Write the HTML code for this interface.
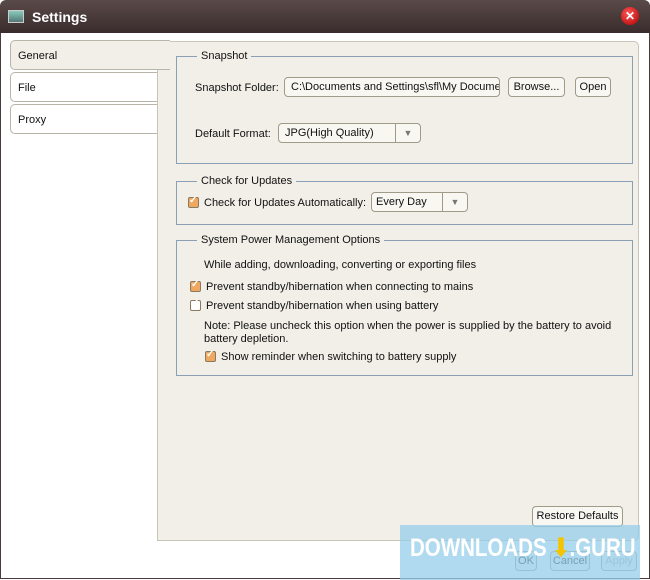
<html><head><style>
body{margin:0;width:650px;height:580px;overflow:hidden;background:#fff;font-family:"Liberation Sans",sans-serif;font-size:11px;color:#111;position:relative}
.a{position:absolute;white-space:nowrap}
.tb{left:0;top:0;width:650px;height:33px;background:linear-gradient(#5a4a4a,#3a2c2c);border-radius:6px 6px 0 0}
.btn{position:absolute;border:1px solid #a09a88;border-radius:4px;background:#f8f7f2;height:20px;line-height:19px;text-align:center;box-sizing:border-box;white-space:nowrap;overflow:hidden}
.fs{position:absolute;border:1px solid #8aa0b4;box-sizing:border-box}
.lg{position:absolute;background:#f1efe8;padding:0 4px;top:-7px;left:20px;white-space:nowrap}
.cb{position:absolute;width:11px;height:11px;border:1px solid #8a7a60;border-radius:2px;background:#f0a860;box-sizing:border-box}
.cb::after{content:"✓";position:absolute;left:0;top:-3px;font-size:10px;color:#fff;font-weight:bold}
.tab{position:absolute;left:10px;width:147px;height:30px;border:1px solid #b8b4a8;border-right:none;border-radius:5px 0 0 5px;box-sizing:border-box;padding-left:7px;line-height:30px;background:#fff}
.t{margin-top:2px}
</style></head><body>
<div class="a tb"></div>
<div class="a" style="left:8px;top:10px;width:14px;height:11px;background:linear-gradient(#8cb,#577);border:1px solid #ccc"></div>
<div class="a" style="left:32px;top:9px;color:#fff;font-size:14px;font-weight:bold">Settings</div>
<div class="a" style="left:621px;top:7px;width:18px;height:18px;border-radius:50%;background:radial-gradient(circle at 40% 35%,#f55,#a00);color:#fff;text-align:center;line-height:18px;font-size:12px;font-weight:bold">✕</div>
<div class="a" style="left:0;top:33px;width:648px;height:545px;border:1px solid #4a3c3c;border-top:none"></div>
<div class="a" style="left:157px;top:41px;width:482px;height:500px;background:#f1efe8;border:1px solid #c8c4b8;border-radius:0 5px 5px 0;box-sizing:border-box"></div>
<div class="tab" style="top:40px;background:#f1efe8;width:160px">General</div>
<div class="tab" style="top:72px">File</div>
<div class="tab" style="top:104px">Proxy</div>
<div class="fs" style="left:176px;top:56px;width:457px;height:108px"><span class="lg">Snapshot</span></div>
<div class="a" style="left:195px;top:82px">Snapshot Folder:</div>
<div class="btn" style="left:284px;top:77px;width:216px;text-align:left;padding-left:6px">C:\Documents and Settings\sfl\My Docume</div>
<div class="btn" style="left:508px;top:77px;width:57px">Browse...</div>
<div class="btn" style="left:575px;top:77px;width:36px">Open</div>
<div class="a" style="left:195px;top:128px">Default Format:</div>
<div class="btn" style="left:278px;top:123px;width:143px;text-align:left;padding-left:6px">JPG(High Quality)<span style="position:absolute;right:0;top:0;width:24px;height:18px;border-left:1px solid #a09a88;color:#777;text-align:center;font-size:9px">▼</span></div>
<div class="fs" style="left:176px;top:181px;width:457px;height:44px"><span class="lg">Check for Updates</span></div>
<div class="cb" style="left:188px;top:197px"></div>
<div class="a" style="left:204px;top:197px">Check for Updates Automatically:</div>
<div class="btn" style="left:371px;top:192px;width:97px;text-align:left;padding-left:4px">Every Day<span style="position:absolute;right:0;top:0;width:24px;height:18px;border-left:1px solid #a09a88;color:#777;text-align:center;font-size:9px">▼</span></div>
<div class="fs" style="left:176px;top:240px;width:457px;height:136px"><span class="lg">System Power Management Options</span></div>
<div class="a" style="left:204px;top:259px">While adding, downloading, converting or exporting files</div>
<div class="cb" style="left:190px;top:281px"></div>
<div class="a" style="left:206px;top:281px">Prevent standby/hibernation when connecting to mains</div>
<div class="cb" style="left:190px;top:300px;background:#fff"></div>
<div class="a" style="left:206px;top:300px">Prevent standby/hibernation when using battery</div>
<div class="a" style="left:204px;top:320px;width:420px;line-height:13px;white-space:normal">Note: Please uncheck this option when the power is supplied by the battery to avoid battery depletion.</div>
<div class="cb" style="left:205px;top:351px"></div>
<div class="a" style="left:221px;top:351px">Show reminder when switching to battery supply</div>
<div class="btn" style="left:532px;top:506px;width:91px;height:21px">Restore Defaults</div>
<div class="btn" style="left:515px;top:551px;width:22px">OK</div>
<div class="btn" style="left:550px;top:551px;width:40px">Cancel</div>
<div class="btn" style="left:601px;top:551px;width:36px;color:#aaa">Apply</div>
<div class="a" style="left:400px;top:525px;width:240px;height:55px;background:rgba(150,205,235,0.75)"></div>
<div class="a" style="left:410px;top:533px;color:#fff;font-size:25px;font-weight:bold;transform:scaleX(0.82);transform-origin:left">DOWNLOADS <span style="color:#f5c400">⬇</span>.GURU</div>
</body></html>
